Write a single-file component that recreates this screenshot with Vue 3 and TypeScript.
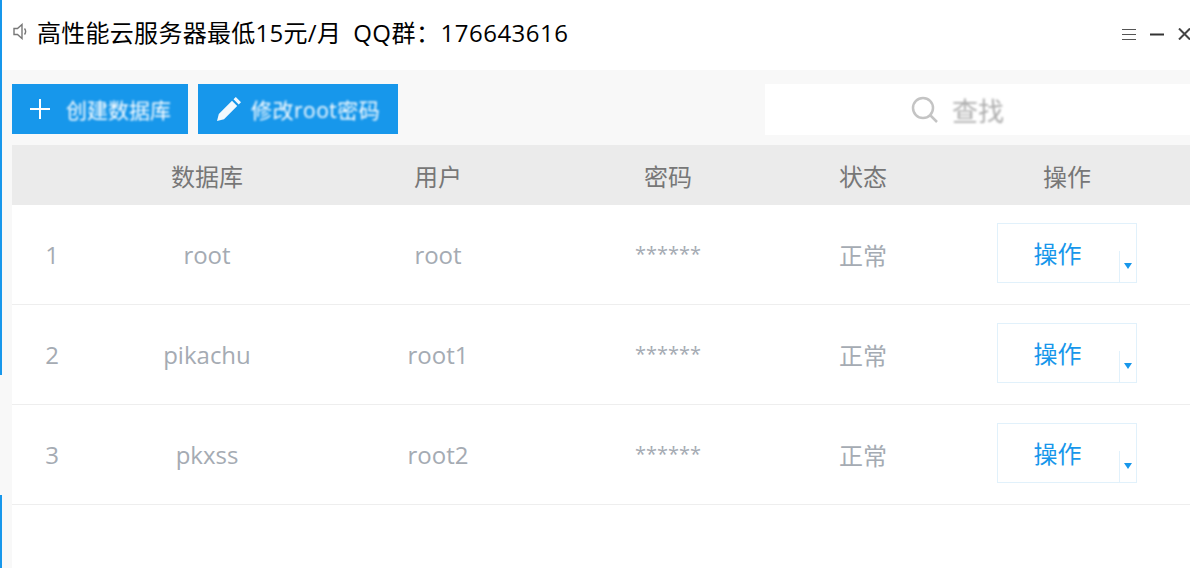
<template>
  <div class="app">
    <header class="topbar">
      <div class="notice">
        <svg class="speaker" width="15" height="17" viewBox="0 0 15 17" fill="none" stroke="#777" stroke-width="1.4">
          <path d="M1 5.500h3.500L9 1.500v14l-4.500-4H1z" />
          <path d="M11.500 5.500c1.500 2 1.500 4 0 6" />
        </svg>
        <span>高性能云服务器最低15元/月<span class="qq">QQ群：176643616</span></span>
      </div>
      <div class="win-controls">
        <svg width="14" height="11" viewBox="0 0 14 11" stroke="#555" stroke-width="1">
          <path d="M0 .5h14M0 5.500h14M0 10.500h14" />
        </svg>
        <svg width="14" height="11" viewBox="0 0 14 11" stroke="#333" stroke-width="2">
          <path d="M0 5.500h14" />
        </svg>
        <svg class="close" width="13" height="12" viewBox="0 0 13 12" stroke="#444" stroke-width="2">
          <path d="M1 .5l11 11M12 .5l-11 11" />
        </svg>
      </div>
    </header>

    <main class="content">
      <div class="toolbar">
        <button class="btn btn-create" type="button">
          <svg width="20" height="20" viewBox="0 0 20 20" stroke="#fff" stroke-width="2">
            <path d="M10 0v20M0 10h20" />
          </svg>
          <span class="btn-text">创建数据库</span>
        </button>
        <button class="btn btn-edit" type="button">
          <svg width="24" height="24" viewBox="0 0 24 24" fill="#f2f9fe">
            <path d="M0 24l1.800-7L15 3.800l5.200 5.200L7 22.200zM16.500 2.300L18.800 0 24 5.200l-2.300 2.300z" />
          </svg>
          <span class="btn-text">修改root密码</span>
        </button>
        <div class="search">
          <svg class="search-icon" width="28" height="28" viewBox="0 0 28 28" fill="none" stroke="#c4c4c4" stroke-width="2.500">
            <circle cx="12" cy="12" r="10" />
            <path d="M19 19l7 7" />
          </svg>
          <span class="search-text">查找</span>
        </div>
      </div>

      <div class="table">
        <div class="row head">
          <div v-for="(col, i) in columns" :key="i">{{ col }}</div>
        </div>
        <div v-for="(item, i) in rows" :key="item.name" class="row body">
          <div class="num">{{ i + 1 }}</div>
          <div>{{ item.name }}</div>
          <div>{{ item.user }}</div>
          <div class="pwd">******</div>
          <div>正常</div>
          <div class="op-cell">
            <div class="op">
              <span class="op-label">操作</span>
              <span class="op-drop"><i class="caret"></i></span>
            </div>
          </div>
        </div>
      </div>
    </main>

    <i class="edge edge-top"></i>
    <i class="edge edge-bottom"></i>
  </div>
</template>

<script setup lang="ts">
const columns: string[] = ['', '数据库', '用户', '密码', '状态', '操作'];

const rows = [
  { name: 'root', user: 'root' },
  { name: 'pikachu', user: 'root1' },
  { name: 'pkxss', user: 'root2' },
];
</script>

<style>
html,
body {
  margin: 0;
  overflow: hidden;
}
</style>

<style scoped>
.app {
  position: relative;
  width: 1190px;
  height: 568px;
  overflow: hidden;
  background: #f8f8f8;
  font-family: "Open Sans", "Noto Sans CJK SC", sans-serif;
}

.edge {
  position: absolute;
  left: 0;
  width: 2px;
  background: #1797eb;
}

.edge-top {
  top: 0;
  height: 375px;
}

.edge-bottom {
  top: 495px;
  height: 73px;
}

.topbar {
  height: 70px;
  display: flex;
  align-items: center;
  justify-content: space-between;
  padding: 0 0 8px 13px;
  box-sizing: border-box;
  background: #fff;
}

.notice {
  display: flex;
  align-items: center;
  gap: 9px;
  font-size: 24px;
  letter-spacing: 0.28px;
  color: #000;
  white-space: nowrap;
}

.qq {
  margin-left: 12px;
  letter-spacing: 0.5px;
}

.speaker {
  margin-top: 1px;
}

.win-controls {
  display: flex;
  align-items: center;
  gap: 14px;
  margin-right: -1px;
  padding-top: 6px;
}

.toolbar {
  display: flex;
  align-items: flex-start;
  gap: 10px;
  height: 75px;
  padding: 14px 0 0 12px;
  box-sizing: border-box;
}

.btn {
  display: flex;
  align-items: center;
  height: 50px;
  padding: 0;
  border: none;
  background: #1797eb;
  color: #fff;
  font-family: inherit;
}

.btn-create {
  width: 176px;
  padding-left: 18px;
  gap: 16px;
}

.btn-edit {
  width: 200px;
  padding-left: 19px;
  gap: 10px;
}

.btn-edit .btn-text {
  letter-spacing: 0.5px;
}

.btn-text {
  font-size: 21px;
  filter: blur(0.8px);
  white-space: nowrap;
}

.search {
  display: flex;
  align-items: center;
  justify-content: center;
  gap: 13px;
  width: 425px;
  height: 51px;
  margin-left: auto;
  padding-right: 40px;
  box-sizing: border-box;
  background: #fff;
}

.search-icon {
  filter: blur(0.4px);
}

.search-text {
  font-size: 26px;
  color: #adadad;
  filter: blur(0.8px);
}

.table {
  margin-left: 12px;
  height: 423px;
  background: #fff;
  font-size: 24px;
  color: #a5abb3;
}

.row {
  display: grid;
  grid-template-columns: 80px 230px 232px 228px 162px 246px;
  text-align: center;
  align-items: center;
}

.head {
  height: 60px;
  background: #ebebeb;
  color: #777;
}

.body {
  height: 100px;
  box-sizing: border-box;
  border-bottom: 1px solid #eeeeee;
}

.pwd {
  font-size: 20px;
  margin-top: -3px;
}

.op-cell {
  display: flex;
  justify-content: flex-start;
  padding-left: 53px;
  margin-top: -4px;
}

.op {
  position: relative;
  width: 140px;
  height: 60px;
  box-sizing: border-box;
  border: 1px solid #e1f1fb;
  color: #1797eb;
  line-height: 60px;
}

.op-label {
  display: block;
  width: 119px;
}

.op-drop {
  position: absolute;
  right: 0;
  bottom: 0;
  width: 16px;
  height: 31px;
  border-left: 1px solid #e1f1fb;
}

.caret {
  position: absolute;
  left: 4px;
  top: 12px;
  border-left: 4.5px solid transparent;
  border-right: 4.5px solid transparent;
  border-top: 6px solid #1797eb;
}
</style>
